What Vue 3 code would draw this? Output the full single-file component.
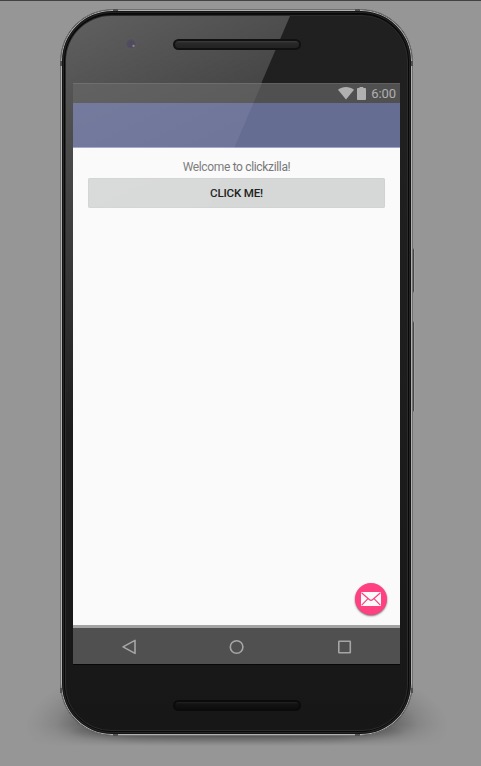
<script setup>
const title = 'Welcome to clickzilla!'
const action = 'Click me!'
const time = '6:00'
</script>

<template>
  <main class="stage">
    <div class="ground-shadow"></div>
    <div class="power-key"></div>
    <div class="volume-key"></div>
    <section class="phone">
      <div class="face">
        <svg class="glare" width="342" height="711" viewBox="0 0 342 711" aria-hidden="true">
          <defs>
            <linearGradient id="faceGlare" gradientUnits="userSpaceOnUse" x1="0" y1="0" x2="170" y2="330">
              <stop offset="0" stop-color="#fff" stop-opacity=".29" />
              <stop offset="1" stop-color="#fff" stop-opacity="0" />
            </linearGradient>
          </defs>
          <path d="M0 0H224L0 524Z" fill="url(#faceGlare)" />
        </svg>
        <header class="forehead">
          <span class="camera"></span>
          <span class="speaker top"></span>
        </header>

        <div class="screen">
          <div class="status">
            <svg class="wifi" width="16" height="13" viewBox="0 0 16 13"><path d="M0 2.8C4.7-.9 11.3-.9 16 2.8L8 12.6Z" fill="#b0b0b0" /></svg>
            <svg class="battery" width="9" height="13" viewBox="0 0 9 13"><path d="M2.5 0H6.3V1.1H8.2Q9 1.1 9 2V12.1Q9 13 8.2 13H.8Q0 13 0 12.1V2Q0 1.1.8 1.1H2.5Z" fill="#b0b0b0" /></svg>
            <span class="time">{{ time }}</span>
          </div>
          <div class="toolbar"></div>
          <div class="content">
            <p class="welcome">{{ title }}</p>
            <button class="click">{{ action }}</button>
            <button class="fab" aria-label="Mail">
              <svg width="20" height="14" viewBox="0 0 20 14">
                <rect width="20" height="14" rx=".8" fill="#fafafa" />
                <path d="M.5.8L8.5 7.7Q10 9 11.5 7.7L19.5.8M.7 13.2L7 6.6M19.3 13.2L13 6.6" fill="none" stroke="#ff4081" stroke-width="1.2" />
              </svg>
            </button>
          </div>
          <nav class="nav">
            <svg width="16" height="16" viewBox="0 0 16 16"><path d="M14 1.4V14.4L2 7.9Z" /></svg>
            <svg width="16" height="16" viewBox="0 0 16 16"><circle cx="7.6" cy="8" r="6.3" /></svg>
            <svg width="16" height="16" viewBox="0 0 16 16"><rect x="1.8" y="2.2" width="11.5" height="11.5" rx=".5" /></svg>
          </nav>
          <svg class="glare" width="327" height="582" viewBox="0 0 327 582" aria-hidden="true">
            <defs>
              <linearGradient id="screenGlare" gradientUnits="userSpaceOnUse" x1="0" y1="0" x2="140" y2="280">
                <stop offset="0" stop-color="#fff" stop-opacity=".1" />
                <stop offset="1" stop-color="#fff" stop-opacity="0" />
              </linearGradient>
            </defs>
            <path d="M0 0H189L0 442Z" fill="url(#screenGlare)" />
          </svg>
        </div>

        <footer class="chin"><span class="speaker bottom"></span></footer>
      </div>
      <i class="notch tl"></i><i class="notch tr"></i><i class="notch bl"></i><i class="notch br"></i>
      <i class="seam lt"></i><i class="seam rt"></i><i class="seam lb"></i><i class="seam rb"></i>
    </section>
  </main>
</template>

<style>
body { margin: 0; background: #969696; }
</style>

<style scoped>
* { box-sizing: border-box; }
.stage {
  position: relative;
  height: 766px;
  overflow: hidden;
  padding: 8px 0 0 60px;
  border-top: 1px solid #424246;
  background: #969696;
  font-family: Roboto, sans-serif;
}
.ground-shadow {
  position: absolute;
  left: 26px;
  top: 670px;
  width: 422px;
  height: 75px;
  background:
    radial-gradient(ellipse 170px 15px at 50% 61px, rgba(0, 0, 0, .8), rgba(0, 0, 0, .5) 60%, transparent),
    radial-gradient(ellipse 211px 74px at 50% 56px, rgba(0, 0, 0, .6) 50%, rgba(0, 0, 0, .3) 74%, rgba(0, 0, 0, .1) 86%, rgba(0, 0, 0, .03) 94%, transparent 100%);
  -webkit-mask-image: linear-gradient(#000 54px, transparent 75px);
  mask-image: linear-gradient(#000 54px, transparent 75px);
}
.power-key, .volume-key {
  position: absolute;
  left: 411px;
  width: 3px;
  background: #484848;
  border-radius: 0 2px 2px 0;
  box-shadow: 1px 0 #a0a0a0;
}
.power-key { top: 247px; height: 45px; }
.volume-key { top: 320px; height: 91px; }
.phone {
  position: relative;
  width: 353px;
  height: 727px;
  padding: 5px 4px 4px;
  border: 1px solid #707070;
  border-radius: 52px;
  background: #0d0d0d;
  box-shadow: inset 0 0 0 1px #b0b0b0, inset 0 0 0 2px #151515, inset 0 0 0 3px #242424, inset 0 0 0 4px #080808;
}
.face {
  position: relative;
  display: flex;
  flex-direction: column;
  width: 343px;
  height: 716px;
  padding: 0 7px;
  overflow: hidden;
  border: 1px solid #2b2b2b;
  border-radius: 46px;
  background: linear-gradient(#202020, #1d1d1d 50%, #171717);
}
.glare { position: absolute; left: 0; top: 0; pointer-events: none; }
.forehead { position: relative; flex: 0 0 67px; display: flex; justify-content: center; align-items: flex-start; padding: 23px 0 0 0; }
.camera {
  position: absolute;
  left: 52px;
  top: 22px;
  width: 12px;
  height: 12px;
  border-radius: 50%;
  background: radial-gradient(circle at 8.5px 7.8px, #98808c 0 .7px, transparent 1.5px), radial-gradient(circle, #4d4b5d 0 2px, #514f5a 4px, #5a595d 5.5px);
}
.speaker {
  width: 128px;
  height: 11px;
  border: 2px solid #111;
  border-radius: 6px;
}
.top { background: linear-gradient(#3d3d3d, #292929 2px, #222); }
.bottom { border-color: #0b0b0b; background: linear-gradient(#232323, #131313 2px, #0d0d0d); }
.screen { position: relative; flex: 0 0 582px; width: 327px; display: flex; flex-direction: column; background: #fafafa; }
.status { flex: 0 0 20px; display: flex; align-items: center; justify-content: flex-end; padding: 0 4px 0 0; background: #505050; border-top: 1px solid #606060; color: #b0b0b0; }
.wifi { margin-right: 3px; }
.battery { margin-right: 5px; }
.time { font-size: 13px; line-height: 15px; letter-spacing: -.1px; }
.toolbar { flex: 0 0 45px; background: #666d93; border-bottom: 1px solid #9fa4c5; }
.content { position: relative; flex: 0 0 477px; display: flex; flex-direction: column; padding: 11px 15px 0; }
.welcome { margin: 0; height: 19px; font-size: 12px; line-height: 16px; letter-spacing: -.34px; text-align: center; color: #777; }
.click { height: 30px; padding: 0; border: 0; border-radius: 2px; background: #d6d8d7; color: #222; font: 500 11.6px/28px Roboto, sans-serif; letter-spacing: -.2px; text-transform: uppercase; box-shadow: inset 0 0 0 1px #d1d3d2; }
.fab { position: absolute; right: 13px; bottom: 10px; width: 32px; height: 32px; padding: 0; display: grid; place-items: center; border: 0; border-radius: 50%; background: #ff4081; box-shadow: 0 1px 2px rgba(0, 0, 0, .55); }
.nav { flex: 0 0 40px; display: grid; grid-template-columns: repeat(3, 108px); justify-content: center; justify-items: center; align-items: center; border-top: 3px solid #a3a3a3; border-bottom: 1px solid #080808; background: #505050; padding-top: 1px; }
.nav svg { fill: none; stroke: #a6a6a6; stroke-width: 1.6; stroke-linejoin: round; }
.chin { flex: 1; display: flex; justify-content: center; align-items: flex-start; padding: 35px 0 0 0; }
.notch, .seam { position: absolute; background: #505050; }
.notch { width: 5px; height: 2px; }
.tl { left: 52px; top: -1px; }
.tr { right: 52px; top: -1px; }
.bl { left: 52px; bottom: -1px; }
.br { right: 52px; bottom: -1px; }
.seam { width: 2px; height: 5px; }
.lt { left: -1px; top: 51px; }
.rt { right: -1px; top: 51px; }
.lb { left: -1px; bottom: 42px; }
.rb { right: -1px; bottom: 42px; }
</style>
